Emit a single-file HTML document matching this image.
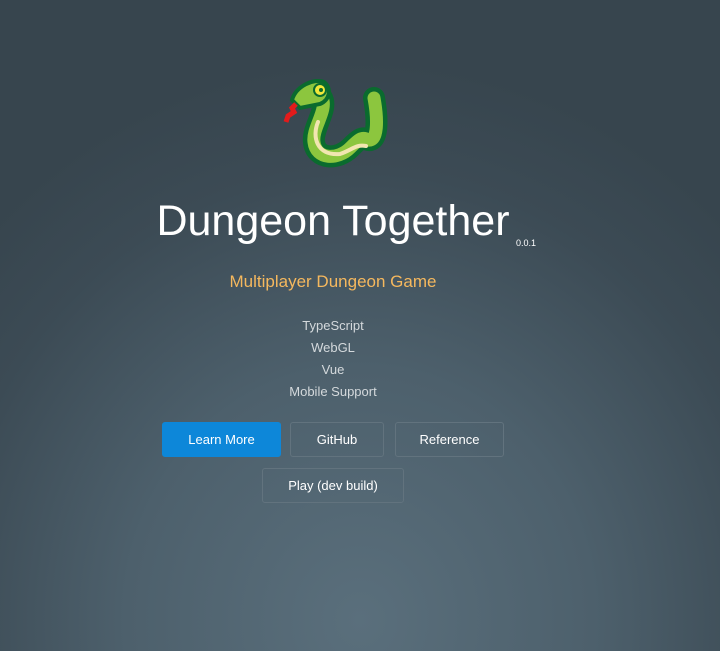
<!DOCTYPE html>
<html><head><style>
html,body{margin:0;padding:0;width:720px;height:651px;overflow:hidden}
body{background:radial-gradient(ellipse 520px 560px at 360px 620px,#5a6f7c 0%,#4d606c 45%,#3c4b55 80%,#37454e 100%);font-family:"Liberation Sans",sans-serif;position:relative}
.abs{position:absolute}
.title{left:0;width:666px;top:197px;text-align:center;font-size:43px;color:#fff;font-weight:300}
.title span{font-size:9px;position:absolute;left:516px;top:41px;letter-spacing:0}
.sub{left:0;width:666px;top:272px;text-align:center;color:#f5b85e;font-size:17px}
.list{left:0;width:666px;top:315px;text-align:center;color:#d4d9dc;font-size:13px;line-height:22px}
.btn{position:absolute;height:35px;box-sizing:border-box;border:1px solid #62737e;border-radius:3px;color:#fff;font-size:13px;text-align:center;line-height:33px}
.blue{background:#0d87d9;border-color:#0d87d9}
</style></head><body>
<svg class="abs" style="left:278px;top:74px" width="112" height="96" viewBox="278 74 112 96">
<g fill="none" stroke-linecap="round" stroke-linejoin="round">
<path d="M322 98 C328 110 312 128 314 142 C316 160 338 160 350 148 C358 140 362 136 368 140 C378 142 378 120 374 98" stroke="#0a6b2e" stroke-width="22"/>
<path d="M322 98 C328 110 312 128 314 142 C316 160 338 160 350 148 C358 140 362 136 368 140 C378 142 378 120 374 98" stroke="#8cc63e" stroke-width="13"/>
<path d="M318 122 C312 136 316 156 340 154 C352 150 356 144 366 146" stroke="#f2e6b0" stroke-width="4"/>
</g>
<path d="M292 100 C296 86 314 78 324 82 C332 88 330 100 320 104 L300 108 Z" fill="#8cc63e" stroke="#0a6b2e" stroke-width="4"/>
<circle cx="320" cy="90" r="6" fill="#f0e83a" stroke="#0a6b2e" stroke-width="2"/>
<circle cx="321" cy="90" r="2" fill="#0a6b2e"/>
<path d="M296 104 L292 108 L294 112 L288 116 L286 122" stroke="#e21b1b" stroke-width="5" fill="none"/>
</svg>
<div class="abs title">Dungeon Together<span>0.0.1</span></div>
<div class="abs sub">Multiplayer Dungeon Game</div>
<div class="abs list">TypeScript<br>WebGL<br>Vue<br>Mobile Support</div>
<div class="btn blue" style="left:162px;top:422px;width:119px">Learn More</div>
<div class="btn" style="left:290px;top:422px;width:94px">GitHub</div>
<div class="btn" style="left:395px;top:422px;width:109px">Reference</div>
<div class="btn" style="left:262px;top:468px;width:142px">Play (dev build)</div>
</body></html>
